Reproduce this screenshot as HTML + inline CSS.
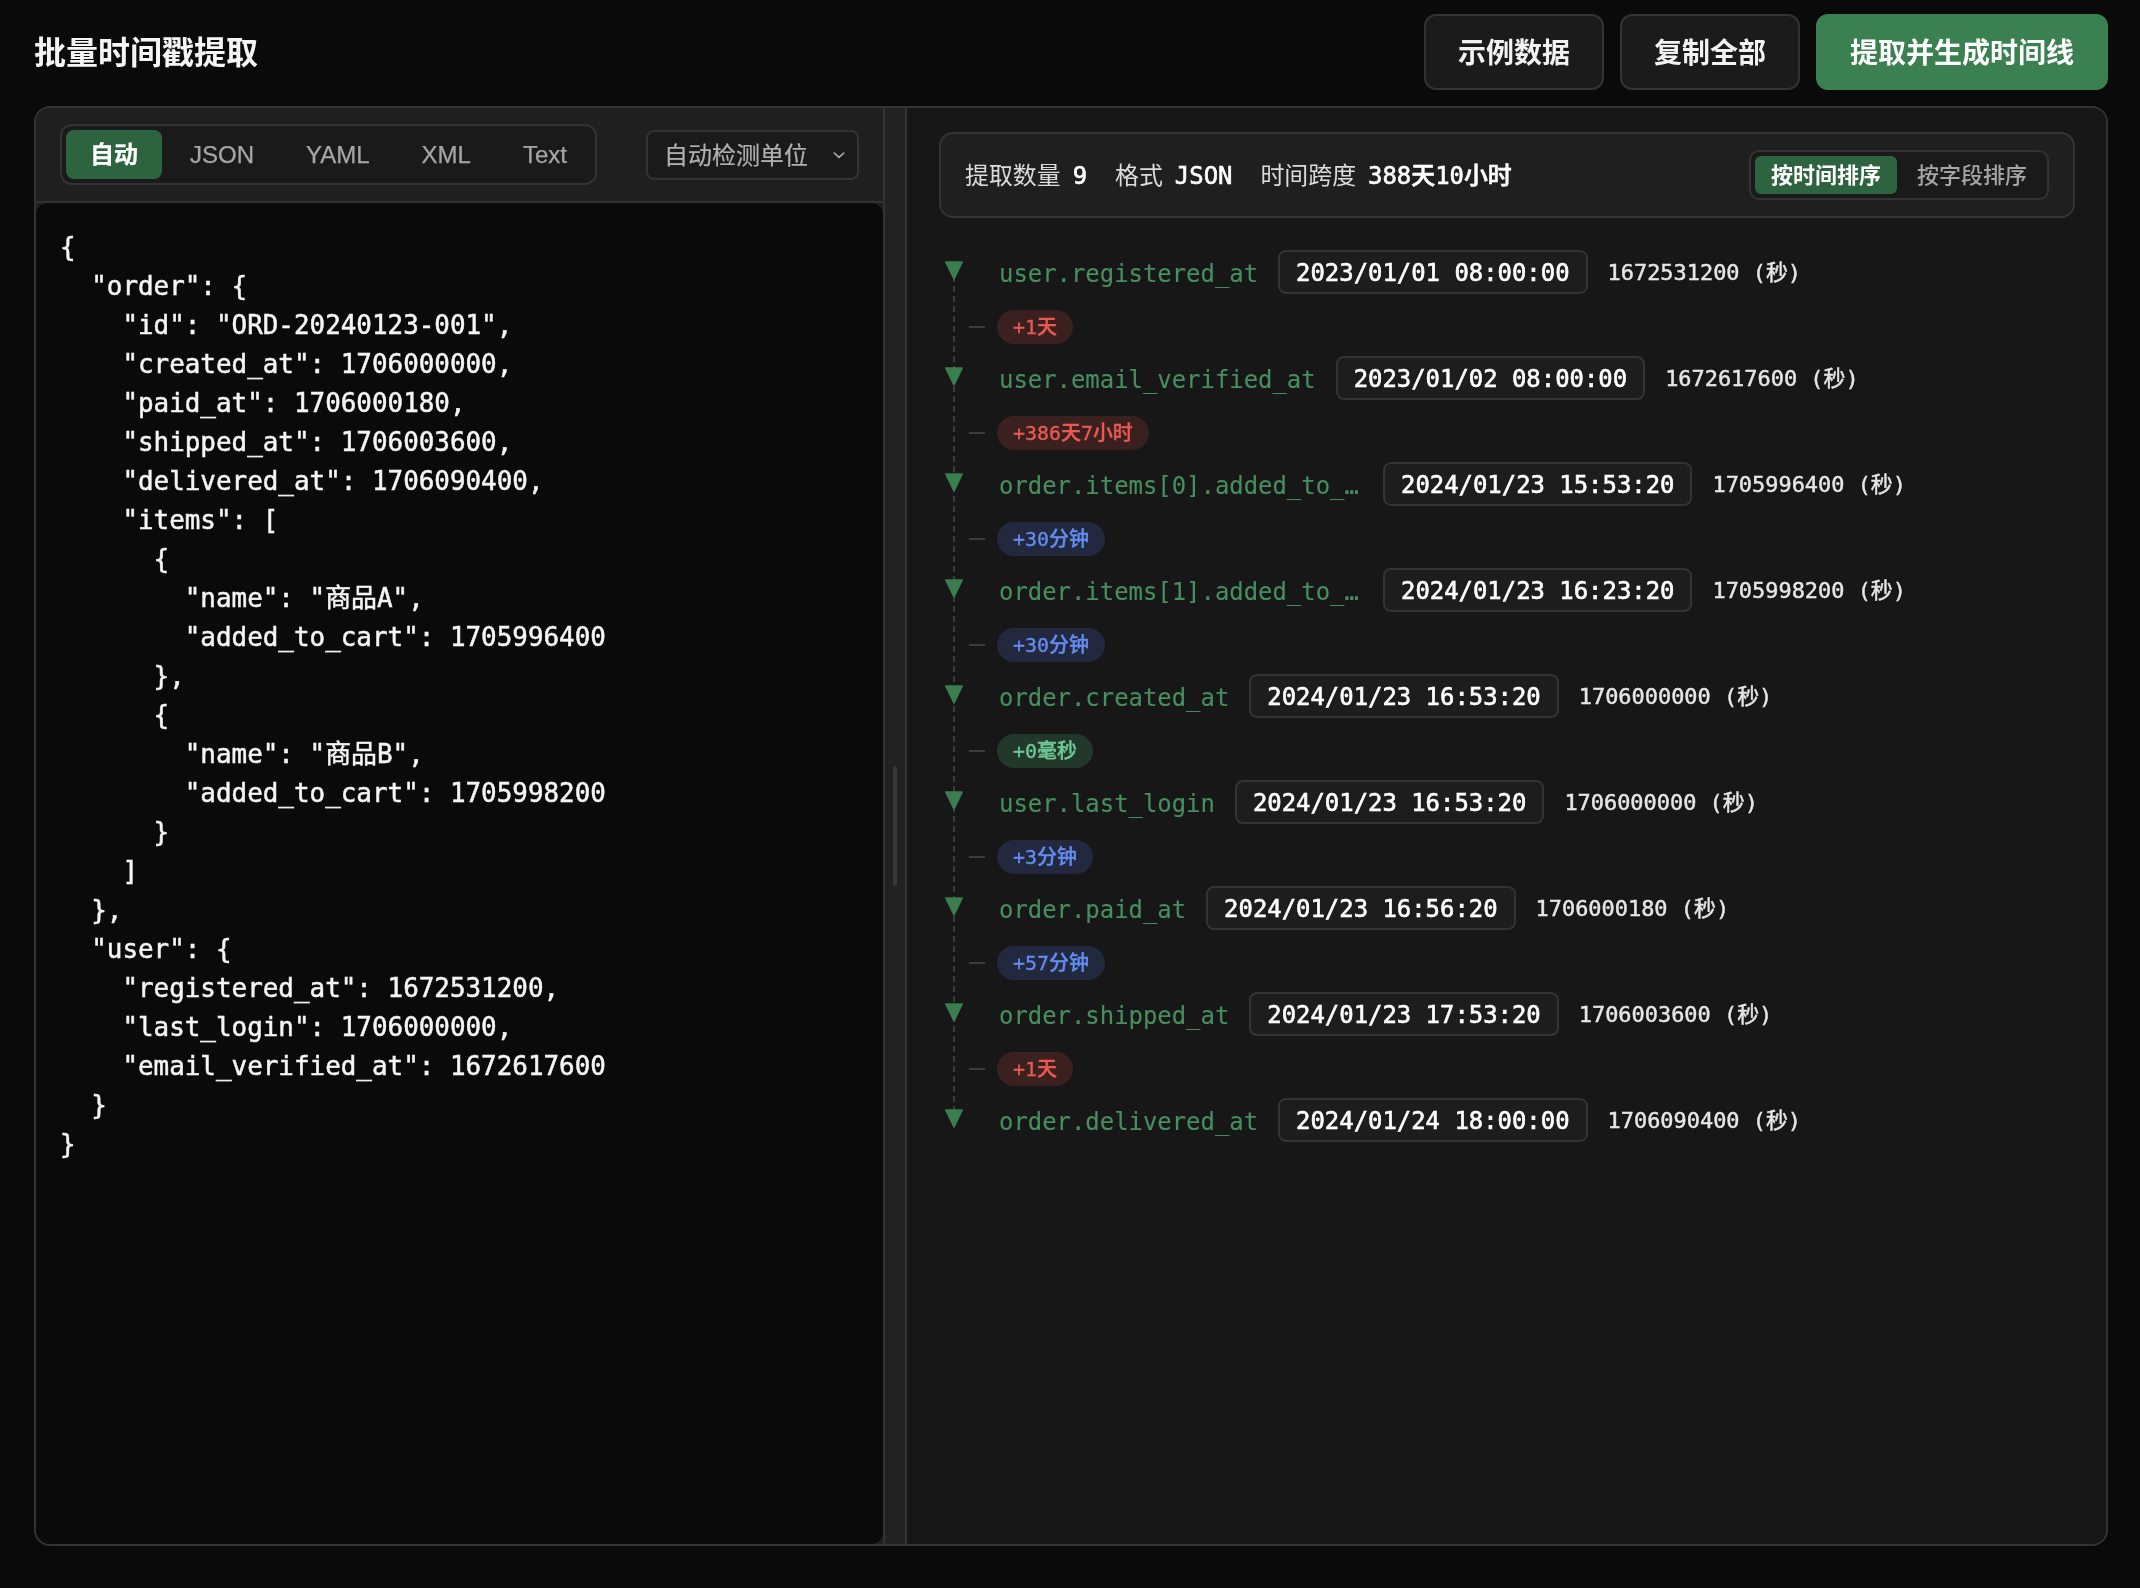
<!DOCTYPE html>
<html lang="zh-CN">
<head>
<meta charset="utf-8">
<title>批量时间戳提取</title>
<style>
*{box-sizing:border-box;margin:0;padding:0}
button{font-family:inherit;-webkit-appearance:none;appearance:none;outline:none}
html,body{width:2140px;height:1588px;overflow:hidden;background:#0a0a0a}
body{position:relative;}
.layer{position:absolute;left:0;top:0;width:2140px;height:1588px;will-change:transform;font-family:"Liberation Sans", "Noto Sans CJK SC", sans-serif;color:#fff;-webkit-font-smoothing:antialiased}
.title{position:absolute;left:34px;top:29px;height:48px;line-height:48px;font-size:32px;font-weight:700;color:#f5f5f5;white-space:nowrap}
.hbtn{position:absolute;top:14px;height:76px;border:2px solid #333;border-radius:12px;background:#1b1b1b;color:#f2f2f2;font-size:28px;font-weight:700;display:flex;align-items:center;justify-content:center;white-space:nowrap;padding-bottom:2px}
.hbtn.primary{background:#3a8050;border-color:#3a8050;color:#fff}
.wrap{position:absolute;left:34px;top:106px;width:2074px;height:1440px;border:2px solid #333;border-radius:16px;overflow:hidden;background:#171717}
.left{position:absolute;left:0;top:0;width:847px;height:1436px;background:#1f1f1f}
.toolbar{position:absolute;left:0;top:0;width:847px;height:95px;border-bottom:2px solid #333;background:#1f1f1f}
.seg{position:absolute;left:24px;top:16px;height:61px;width:537px;border:2px solid #333;border-radius:12px;background:#1a1a1a;display:flex;align-items:center;padding:0 4px;gap:4px}
.seg button{border:0;background:none;display:block;height:49px;line-height:49px;padding:0 24px;border-radius:8px;font-size:24px;color:#a6a6a6;white-space:nowrap;-webkit-text-stroke:0.25px}
.seg button.on{background:#2d633e;color:#fff;font-weight:700}
.sel{position:absolute;left:610px;top:22px;width:213px;height:50px;border:2px solid #333;border-radius:8px;background:#1a1a1a;color:#b0b0b0;font-size:24px;line-height:48px;padding-left:16px;-webkit-text-stroke:0.2px;white-space:nowrap}
.sel svg{position:absolute;right:8px;top:13px}
.code{position:absolute;left:0;top:95px;width:847px;height:1341px;background:#0a0a0a;border-radius:12px 12px 12px 14px;padding:25px 24px;font-family:"DejaVu Sans Mono", "Liberation Mono", "Noto Sans CJK SC", monospace;font-size:25.91px;line-height:39px;color:#f5f5f5;white-space:pre;overflow:hidden;-webkit-text-stroke:0.5px #f5f5f5}
.divider{position:absolute;left:847px;top:0;width:24px;height:1436px;background:#222;border-left:2px solid #333;border-right:2px solid #333}
.divider i{position:absolute;left:8px;top:658px;width:4px;height:120px;border-radius:2px;background:#383838}
.right{position:absolute;left:871px;top:0;width:1199px;height:1436px;background:#171717}
.summary{position:absolute;left:32px;top:24px;width:1136px;height:86px;border:2px solid #333;border-radius:14px;background:#1f1f1f;font-family:"DejaVu Sans Mono", "Liberation Mono", "Noto Sans CJK SC", monospace;font-size:23.92px;color:#dcdcdc;display:flex;align-items:center;padding:0 24px 3px;white-space:nowrap}
.summary .it{margin-right:28px}
.summary b{margin-left:12px;color:#fff;font-weight:500;-webkit-text-stroke:0.6px #fff}
.sort{position:absolute;right:24px;top:16px;height:50px;border:2px solid #333;border-radius:10px;background:#1a1a1a;display:flex;align-items:center;padding:0 4px;gap:4px;font-family:"Liberation Sans", "Noto Sans CJK SC", sans-serif}
.sort button{border:0;background:none;display:block;height:38px;line-height:40px;padding:0 16px;border-radius:6px;font-size:22px;color:#a6a6a6;font-weight:500}
.sort button.on{background:#2d633e;color:#fff;font-weight:700}
.tl{position:absolute;left:0;top:142px;width:1199px;font-family:"DejaVu Sans Mono", "Liberation Mono", "Noto Sans CJK SC", monospace}
.tl .vline{position:absolute;left:46px;top:26px;width:2px;height:834px;background:repeating-linear-gradient(to bottom,#3c3c3c 0,#3c3c3c 6px,transparent 6px,transparent 10px)}
.row{position:relative;height:44px;display:flex;align-items:center;padding-left:92px;white-space:nowrap}
.tri{position:absolute;left:37px;top:10.5px}
.tri polygon{fill:#3a7e4f;stroke:#3a7e4f;stroke-width:1.6;stroke-linejoin:round}
.name{font-size:23.92px;color:#478f5f;margin-right:20px;padding-top:3px;-webkit-text-stroke:0.12px #478f5f}
.name.trunc{width:364px;margin-right:20px}
.dt{height:44px;line-height:42px;border:2px solid #333;border-radius:8px;background:#1d1d1d;padding:0 16px;font-size:23.92px;font-weight:400;-webkit-text-stroke:0.6px #fff;color:#fff;margin-right:20px}
.raw{font-size:21.93px;color:#e6e6e6;height:44px;line-height:44px;position:relative;top:1px;-webkit-text-stroke:0.45px #e6e6e6}
.delta{position:relative;height:62px;padding:16px 0 12px 90px}
.conn{position:absolute;left:62px;top:32px;width:16px;height:2px;background:#3d3d3d}
.pill{display:inline-block;height:34px;line-height:36px;-webkit-text-stroke:0.35px;border-radius:17px;padding:0 16px;font-size:19.93px;font-weight:500;vertical-align:top}
.pill.r{background:#3a2120;color:#eb5a52}
.pill.b{background:#22283e;color:#648cf0}
.pill.g{background:#21382b;color:#70c896}
</style>
</head>
<body>
<div class="layer">
<h1 class="title">批量时间戳提取</h1>
<button type="button" class="hbtn" style="left:1424px;width:180px">示例数据</button>
<button type="button" class="hbtn" style="left:1620px;width:180px">复制全部</button>
<button type="button" class="hbtn primary" style="left:1816px;width:292px">提取并生成时间线</button>
<div class="wrap">
<div class="left">
<div class="toolbar">
<div class="seg"><button type="button" class="on">自动</button><button type="button">JSON</button><button type="button">YAML</button><button type="button">XML</button><button type="button">Text</button></div>
<div class="sel">自动检测单位<svg width="20" height="20" viewBox="0 0 20 20" fill="none" stroke="#b0b0b0" stroke-width="1.6" stroke-linecap="round" stroke-linejoin="round"><path d="M5.2 8l4.8 4.3 4.8-4.3"/></svg></div>
</div>
<pre class="code">{
  &quot;order&quot;: {
    &quot;id&quot;: &quot;ORD-20240123-001&quot;,
    &quot;created_at&quot;: 1706000000,
    &quot;paid_at&quot;: 1706000180,
    &quot;shipped_at&quot;: 1706003600,
    &quot;delivered_at&quot;: 1706090400,
    &quot;items&quot;: [
      {
        &quot;name&quot;: &quot;商品A&quot;,
        &quot;added_to_cart&quot;: 1705996400
      },
      {
        &quot;name&quot;: &quot;商品B&quot;,
        &quot;added_to_cart&quot;: 1705998200
      }
    ]
  },
  &quot;user&quot;: {
    &quot;registered_at&quot;: 1672531200,
    &quot;last_login&quot;: 1706000000,
    &quot;email_verified_at&quot;: 1672617600
  }
}</pre>
</div>
<div class="divider"><i></i></div>
<div class="right">
<div class="summary"><span class="it">提取数量<b>9</b></span><span class="it">格式<b>JSON</b></span><span class="it">时间跨度<b>388天10小时</b></span>
<div class="sort"><button type="button" class="on">按时间排序</button><button type="button">按字段排序</button></div></div>
<div class="tl"><div class="vline"></div>
<div class="row"><svg class="tri" width="20" height="20" viewBox="0 0 20 20"><polygon points="1.8,1.0 18.2,1.0 10,17.8"/></svg><span class="name">user.registered_at</span><span class="dt">2023/01/01 08:00:00</span><span class="raw">1672531200 (秒)</span></div>
<div class="delta"><i class="conn"></i><span class="pill r">+1天</span></div>
<div class="row"><svg class="tri" width="20" height="20" viewBox="0 0 20 20"><polygon points="1.8,1.0 18.2,1.0 10,17.8"/></svg><span class="name">user.email_verified_at</span><span class="dt">2023/01/02 08:00:00</span><span class="raw">1672617600 (秒)</span></div>
<div class="delta"><i class="conn"></i><span class="pill r">+386天7小时</span></div>
<div class="row"><svg class="tri" width="20" height="20" viewBox="0 0 20 20"><polygon points="1.8,1.0 18.2,1.0 10,17.8"/></svg><span class="name trunc">order.items[0].added_to_…</span><span class="dt">2024/01/23 15:53:20</span><span class="raw">1705996400 (秒)</span></div>
<div class="delta"><i class="conn"></i><span class="pill b">+30分钟</span></div>
<div class="row"><svg class="tri" width="20" height="20" viewBox="0 0 20 20"><polygon points="1.8,1.0 18.2,1.0 10,17.8"/></svg><span class="name trunc">order.items[1].added_to_…</span><span class="dt">2024/01/23 16:23:20</span><span class="raw">1705998200 (秒)</span></div>
<div class="delta"><i class="conn"></i><span class="pill b">+30分钟</span></div>
<div class="row"><svg class="tri" width="20" height="20" viewBox="0 0 20 20"><polygon points="1.8,1.0 18.2,1.0 10,17.8"/></svg><span class="name">order.created_at</span><span class="dt">2024/01/23 16:53:20</span><span class="raw">1706000000 (秒)</span></div>
<div class="delta"><i class="conn"></i><span class="pill g">+0毫秒</span></div>
<div class="row"><svg class="tri" width="20" height="20" viewBox="0 0 20 20"><polygon points="1.8,1.0 18.2,1.0 10,17.8"/></svg><span class="name">user.last_login</span><span class="dt">2024/01/23 16:53:20</span><span class="raw">1706000000 (秒)</span></div>
<div class="delta"><i class="conn"></i><span class="pill b">+3分钟</span></div>
<div class="row"><svg class="tri" width="20" height="20" viewBox="0 0 20 20"><polygon points="1.8,1.0 18.2,1.0 10,17.8"/></svg><span class="name">order.paid_at</span><span class="dt">2024/01/23 16:56:20</span><span class="raw">1706000180 (秒)</span></div>
<div class="delta"><i class="conn"></i><span class="pill b">+57分钟</span></div>
<div class="row"><svg class="tri" width="20" height="20" viewBox="0 0 20 20"><polygon points="1.8,1.0 18.2,1.0 10,17.8"/></svg><span class="name">order.shipped_at</span><span class="dt">2024/01/23 17:53:20</span><span class="raw">1706003600 (秒)</span></div>
<div class="delta"><i class="conn"></i><span class="pill r">+1天</span></div>
<div class="row"><svg class="tri" width="20" height="20" viewBox="0 0 20 20"><polygon points="1.8,1.0 18.2,1.0 10,17.8"/></svg><span class="name">order.delivered_at</span><span class="dt">2024/01/24 18:00:00</span><span class="raw">1706090400 (秒)</span></div>
</div>
</div>
</div>
</div>
</body>
</html>
